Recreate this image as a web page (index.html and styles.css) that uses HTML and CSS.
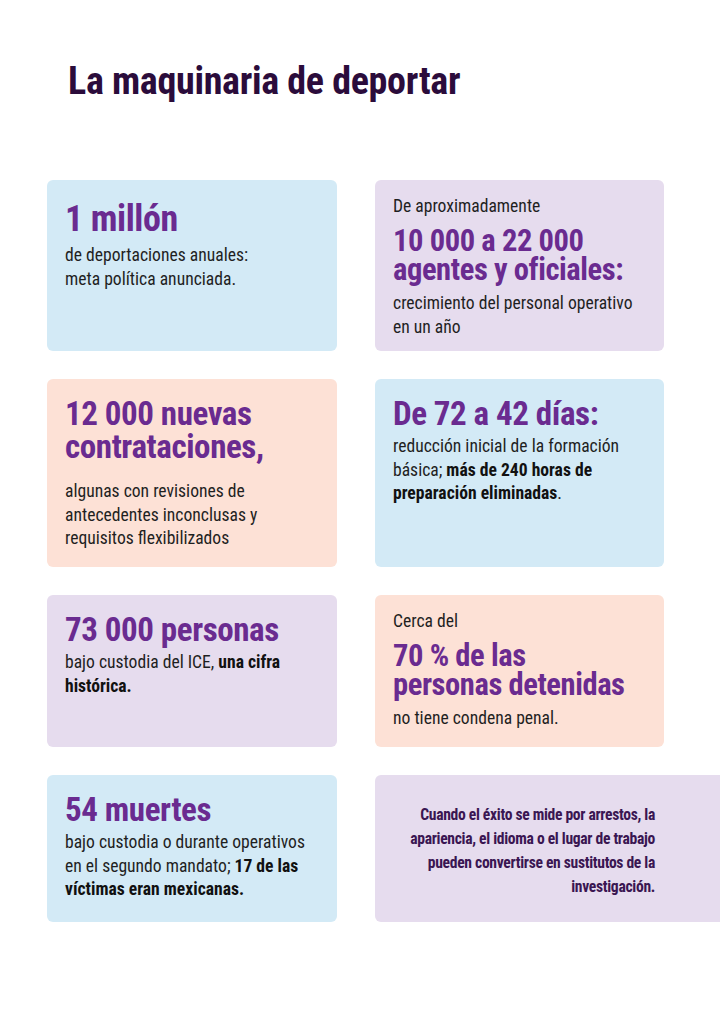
FILE: index.html
```html
<!DOCTYPE html>
<html lang="es">
<head>
<meta charset="utf-8">
<title>La maquinaria de deportar</title>
<link rel="stylesheet" href="styles.css">
</head>
<body>
<main class="page">
  <h1 class="title">La maquinaria de deportar</h1>
  <section class="grid">
    <article class="card card--blue">
      <p class="stat stat--xl">1 millón</p>
      <p class="desc desc--xl">de deportaciones anuales:<br>meta política anunciada.</p>
    </article>
    <article class="card card--lilac">
      <p class="lead">De aproximadamente</p>
      <p class="stat stat--sm">10 000 a 22 000<br>agentes y oficiales:</p>
      <p class="desc desc--sm">crecimiento del personal operativo<br>en un año</p>
    </article>
    <article class="card card--peach">
      <p class="stat">12 000 nuevas<br>contrataciones,</p>
      <p class="desc desc--gap">algunas con revisiones de<br>antecedentes inconclusas y<br>requisitos flexibilizados</p>
    </article>
    <article class="card card--blue">
      <p class="stat">De 72 a 42 días:</p>
      <p class="desc">reducción inicial de la formación<br>básica; <strong>más de 240 horas de<br>preparación eliminadas</strong>.</p>
    </article>
    <article class="card card--lilac">
      <p class="stat">73 000 personas</p>
      <p class="desc">bajo custodia del ICE, <strong>una cifra<br>histórica.</strong></p>
    </article>
    <article class="card card--peach">
      <p class="lead">Cerca del</p>
      <p class="stat stat--sm">70 % de las<br>personas detenidas</p>
      <p class="desc desc--sm">no tiene condena penal.</p>
    </article>
    <article class="card card--blue">
      <p class="stat">54 muertes</p>
      <p class="desc">bajo custodia o durante operativos<br>en el segundo mandato; <strong>17 de las<br>víctimas eran mexicanas.</strong></p>
    </article>
    <article class="card card--lilac card--quote">
      <p class="quote">Cuando el éxito se mide por arrestos, la<br>apariencia, el idioma o el lugar de trabajo<br>pueden convertirse en sustitutos de la<br>investigación.</p>
    </article>
  </section>
</main>
</body>
</html>
```
FILE: styles.css
```css
html, body {
  margin: 0;
  padding: 0;
  background: #ffffff;
}
body {
  font-family: "Roboto Condensed", "Liberation Sans Narrow", "DejaVu Sans Condensed", "Roboto", sans-serif;
  color: #1f1f1f;
  overflow-x: hidden;
}
.page {
  width: 720px;
  min-height: 1024px;
  padding-top: 60px;
  box-sizing: border-box;
}
.title {
  margin: 0 0 0 68px;
  font-size: 38px;
  line-height: 42px;
  font-weight: 700;
  color: #2b0c3b;
  letter-spacing: -0.3px;
  white-space: nowrap;
}
.grid {
  margin: 78px 0 0 47px;
  display: grid;
  grid-template-columns: 290px 289px;
  grid-template-rows: 171px 188px 152px 147px;
  column-gap: 38px;
  row-gap: 28px;
}
.card {
  border-radius: 6px;
  padding: 18px 10px 0 18px;
  box-sizing: border-box;
}
.card--blue { background: #d3eaf6; }
.card--lilac { background: #e6dcee; }
.card--peach { background: #fde1d6; }
.card p { margin: 0; }
.stat {
  font-size: 33px;
  line-height: 33px;
  font-weight: 700;
  color: #6a2b90;
  letter-spacing: -0.4px;
  white-space: nowrap;
}
.stat--xl {
  font-size: 36px;
  line-height: 42px;
}
.stat--sm {
  font-size: 30.5px;
  line-height: 29px;
  margin-top: 9px !important;
}
.lead {
  font-size: 17.6px;
  line-height: 22px;
  color: #1f1f1f;
  margin-top: -3px !important;
}
.desc {
  font-size: 17.6px;
  line-height: 23.5px;
  color: #1f1f1f;
  margin-top: 5px !important;
  white-space: nowrap;
}
.desc--xl { margin-top: 4px !important; }
.desc--sm { margin-top: 8px !important; }
.desc--gap { margin-top: 17px !important; }
.desc strong {
  font-weight: 700;
  color: #111111;
}
.card--quote {
  margin-right: -80px;
  border-radius: 6px 0 0 6px;
  padding: 4px 89px 0 18px;
  display: flex;
  align-items: center;
  justify-content: flex-end;
}
.quote {
  font-size: 15.6px;
  line-height: 24px;
  font-weight: 700;
  color: #3a1652;
  text-align: right;
  letter-spacing: -0.3px;
  white-space: nowrap;
}
```
